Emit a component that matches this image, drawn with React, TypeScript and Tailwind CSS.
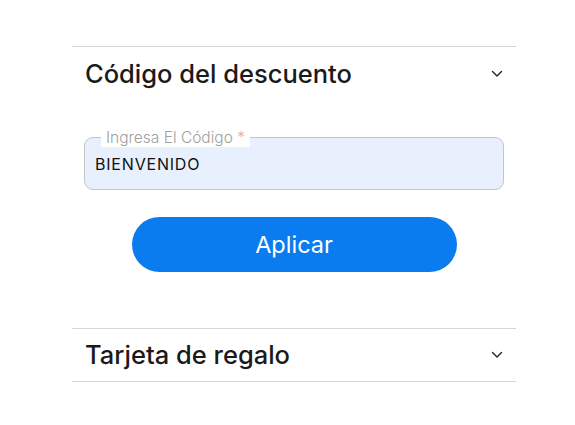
import React from "react";

function Chevron() {
  return (
    <svg width="12" height="8" viewBox="0 0 12 8" fill="none" className="block">
      <path d="M1.5 1.5 L6 6 L10.5 1.5" stroke="#222" strokeWidth="1.4" strokeLinecap="round" strokeLinejoin="round" />
    </svg>
  );
}

export default function App() {
  return (
    <div className="w-[575px] h-[425px] bg-white" style={{ fontFamily: "Inter, 'Noto Sans', sans-serif" }}>
      <div className="ml-[72px] w-[444px] pt-[46px]">
        <div className="border-t border-[#d6d6d6]">
          <div className="h-[54px] flex items-center justify-between pl-[13px] pr-[13px]">
            <span className="text-[25.5px] leading-none text-[#1a1a1a] font-medium">Código del descuento</span>
            <Chevron />
          </div>
          <div className="pt-[36px] px-[12px]">
            <div className="relative h-[53px] rounded-[9px] border border-[#c4c4c4] bg-[#e8f0fe] flex items-end pb-[17px] pl-[10px]">
              <span className="absolute left-[16px] top-[-10px] bg-white px-[5px] h-[19px] leading-[19px] text-[15.5px] text-[#a0a0a0] font-light">
                Ingresa El Código <span className="text-[#f3a0a0]">*</span>
              </span>
              <span className="text-[16px] leading-none text-[#111] tracking-[0.8px]">BIENVENIDO</span>
            </div>
          </div>
          <div className="flex justify-center pt-[27px] pb-[56px]">
            <button className="w-[325px] h-[55px] rounded-full bg-[#0a7cf0] text-white text-[23.5px]">Aplicar</button>
          </div>
        </div>
        <div className="border-t border-b border-[#d6d6d6]">
          <div className="h-[52px] flex items-center justify-between pl-[13px] pr-[13px]">
            <span className="text-[25.5px] leading-none text-[#1a1a1a] font-medium">Tarjeta de regalo</span>
            <Chevron />
          </div>
        </div>
      </div>
    </div>
  );
}
